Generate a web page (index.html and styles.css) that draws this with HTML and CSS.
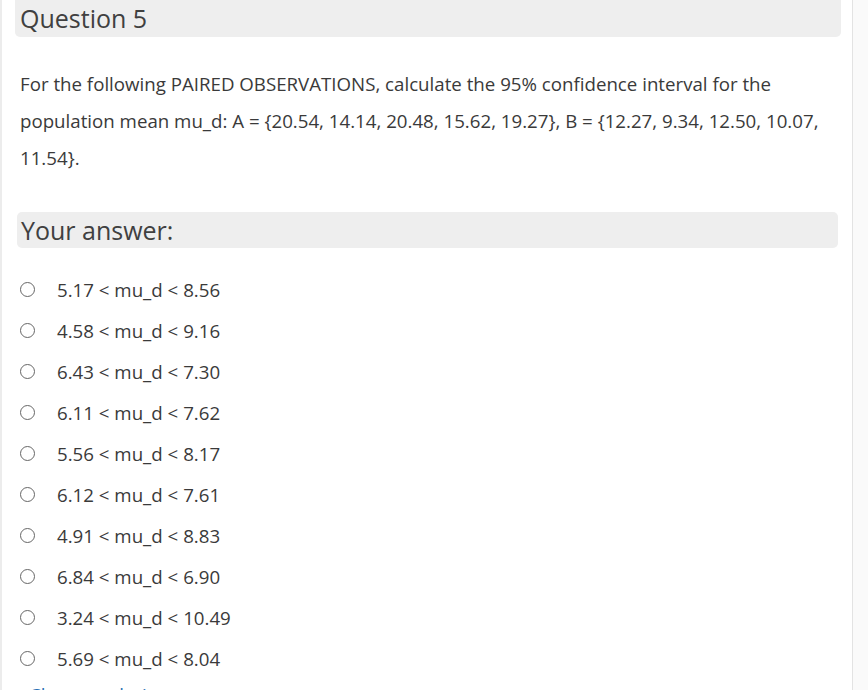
FILE: index.html
```html
<!DOCTYPE html>
<html>
<head>
<meta charset="utf-8">
<link rel="stylesheet" href="styles.css">
</head>
<body>
<div class="page">
  <div class="card">
    <div class="qhead">Question 5</div>
    <div class="qtext">For the following PAIRED OBSERVATIONS, calculate the 95% confidence interval for the population mean mu_d: A = {20.54, 14.14, 20.48, 15.62, 19.27}, B = {12.27, 9.34, 12.50, 10.07, 11.54}.</div>
    <div class="ahead">Your answer:</div>
    <ul class="opts">
      <li><span class="radio"></span><span>5.17 &lt; mu_d &lt; 8.56</span></li>
      <li><span class="radio"></span><span>4.58 &lt; mu_d &lt; 9.16</span></li>
      <li><span class="radio"></span><span>6.43 &lt; mu_d &lt; 7.30</span></li>
      <li><span class="radio"></span><span>6.11 &lt; mu_d &lt; 7.62</span></li>
      <li><span class="radio"></span><span>5.56 &lt; mu_d &lt; 8.17</span></li>
      <li><span class="radio"></span><span>6.12 &lt; mu_d &lt; 7.61</span></li>
      <li><span class="radio"></span><span>4.91 &lt; mu_d &lt; 8.83</span></li>
      <li><span class="radio"></span><span>6.84 &lt; mu_d &lt; 6.90</span></li>
      <li><span class="radio"></span><span>3.24 &lt; mu_d &lt; 10.49</span></li>
      <li><span class="radio"></span><span>5.69 &lt; mu_d &lt; 8.04</span></li>
    </ul>
    <a class="clear" href="#">Clear my choice</a>
  </div>
</div>
</body>
</html>
```
FILE: styles.css
```css
html, body {
  margin: 0;
  padding: 0;
  background: #fff;
}
body {
  font-family: "Open Sans", "Liberation Sans", sans-serif;
  color: #3a3a3a;
  overflow: hidden;
}
.page {
  width: 868px;
  height: 690px;
  background: #fafafa;
}
.card {
  box-sizing: border-box;
  width: 853px;
  height: 690px;
  background: #fff;
  border-left: 2px solid #ececec;
  border-right: 1px solid #e3e3e3;
  padding: 0 11px 0 13px;
}
.qhead {
  background: #eeeeee;
  border-radius: 0 0 5px 5px;
  height: 37px;
  font-size: 25px;
  line-height: 37px;
  padding-left: 5px;
  color: #404040;
}
.qtext {
  margin-top: 28px;
  padding-left: 5px;
  font-size: 18.7px;
  line-height: 37px;
  padding-right: 10px;
}
.ahead {
  margin: 36px 0 0 2px;
  background: #eeeeee;
  border-radius: 5px;
  height: 36px;
  font-size: 25px;
  line-height: 36px;
  padding-left: 4px;
  width: 817px;
  color: #404040;
}
.opts {
  list-style: none;
  margin: 21px 0 0 0;
  padding: 0;
}
.opts li {
  display: flex;
  align-items: center;
  height: 41px;
  font-size: 18.7px;
}
.radio {
  box-sizing: border-box;
  width: 15px;
  height: 15px;
  border: 1.5px solid #666;
  border-radius: 50%;
  margin: 0 22px 0 5px;
}
.clear {
  display: block;
  margin: 3px 0 0 14px;
  color: #2a6fb5;
  font-size: 18.7px;
  text-decoration: none;
}
```
